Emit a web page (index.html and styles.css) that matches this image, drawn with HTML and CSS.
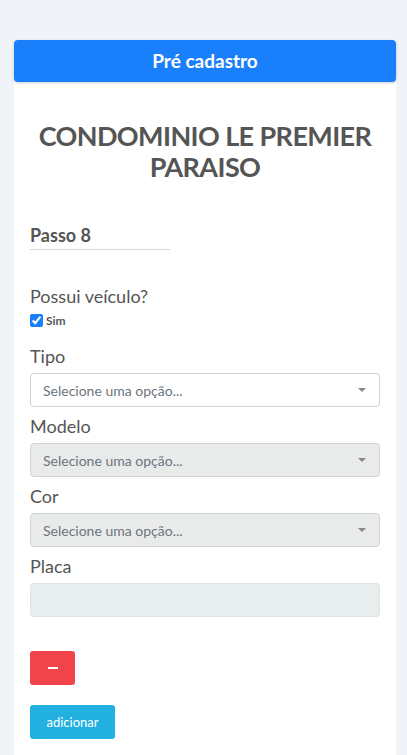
FILE: index.html
```html
<!DOCTYPE html>
<html lang="pt-BR">
<head>
    <meta charset="UTF-8">
    <meta name="viewport" content="width=device-width, initial-scale=1.0">
    <title>Pré cadastro</title>
    <link rel="stylesheet" href="styles.css">
</head>
<body>
    <div class="card">
        <div class="card-header">Pré cadastro</div>
        <div class="card-body">
            <h1 class="condo-name">CONDOMINIO LE PREMIER PARAISO</h1>

            <h2 class="step">Passo 8</h2>

            <div class="field">
                <label class="field-label">Possui veículo?</label>
                <label class="check">
                    <input type="checkbox" checked> Sim
                </label>
            </div>

            <div class="field">
                <label class="field-label">Tipo</label>
                <div class="select">
                    <span>Selecione uma opção...</span>
                    <span class="caret"></span>
                </div>
            </div>

            <div class="field">
                <label class="field-label">Modelo</label>
                <div class="select disabled">
                    <span>Selecione uma opção...</span>
                    <span class="caret"></span>
                </div>
            </div>

            <div class="field">
                <label class="field-label">Cor</label>
                <div class="select disabled">
                    <span>Selecione uma opção...</span>
                    <span class="caret"></span>
                </div>
            </div>

            <div class="field">
                <label class="field-label">Placa</label>
                <div class="input disabled"></div>
            </div>

            <div class="actions">
                <button class="btn btn-remove" aria-label="remover"><span class="minus"></span></button>
                <button class="btn btn-add">adicionar</button>
            </div>
        </div>
    </div>
</body>
</html>
```

FILE: styles.css
```css
:root {
    --primary-color: #1a7ffb;
    --text-color: #555555;
    --muted-color: #6c757d;
    --border-color: #ced4da;
    --disabled-bg: #e9ebeb;
    --page-bg: #f0f4f8;
}

body {
    margin: 0;
    padding: 40px 11px 0 14px;
    background-color: var(--page-bg);
    font-family: 'Lato', 'Open Sans', Arial, sans-serif;
    color: var(--text-color);
}

.card {
    background-color: white;
    min-height: 715px;
}

.card-header {
    background-color: var(--primary-color);
    color: white;
    font-weight: bold;
    font-size: 19px;
    text-align: center;
    height: 42px;
    line-height: 42px;
    border-radius: 4px;
    box-shadow: 0 1px 3px rgba(0,0,0,0.2);
}

.card-body {
    padding: 0 16px 20px;
}

.condo-name {
    margin: 38px 0 0;
    font-size: 27px;
    letter-spacing: -0.6px;
    line-height: 31px;
    text-align: center;
    color: #555;
}

.step {
    display: inline-block;
    margin: 42px 0 0;
    width: 140px;
    padding-bottom: 3px;
    font-size: 18px;
    border-bottom: 1px solid #d6d6d6;
}

.field {
    margin-top: 6px;
}

.field:first-of-type {
    margin-top: 33px;
}

.field-label {
    display: block;
    font-size: 18px;
    line-height: 26px;
    margin-bottom: 4px;
}

.check {
    display: flex;
    align-items: center;
    gap: 3px;
    font-size: 12px;
    font-weight: bold;
    margin: 1px 0 15px;
}

.check input {
    margin: 0;
    width: 13px;
    height: 13px;
    accent-color: var(--primary-color);
}

.select,
.input {
    box-sizing: border-box;
    height: 34px;
    border: 1px solid var(--border-color);
    border-radius: 4px;
    padding: 0 12px;
    display: flex;
    align-items: center;
    justify-content: space-between;
    font-size: 14px;
    color: var(--muted-color);
}

.disabled {
    background-color: var(--disabled-bg);
}

.input.disabled {
    background-color: #e8eeee;
    border-color: #dde3e3;
}

.caret {
    width: 0;
    height: 0;
    border-left: 4px solid transparent;
    border-right: 4px solid transparent;
    border-top: 4px solid #888;
    margin-right: 1px;
}

.actions {
    margin-top: 34px;
    display: flex;
    flex-direction: column;
    align-items: flex-start;
    gap: 20px;
}

.btn {
    border: none;
    border-radius: 3px;
    color: white;
    font-family: inherit;
    font-size: 13px;
    height: 34px;
    cursor: pointer;
}

.btn-remove {
    width: 45px;
    background-color: #f0444a;
    display: flex;
    align-items: center;
    justify-content: center;
}

.minus {
    display: block;
    width: 10px;
    height: 2px;
    margin-top: -1px;
    background-color: white;
}

.btn-add {
    width: 85px;
    background-color: #22b0e0;
}
```
